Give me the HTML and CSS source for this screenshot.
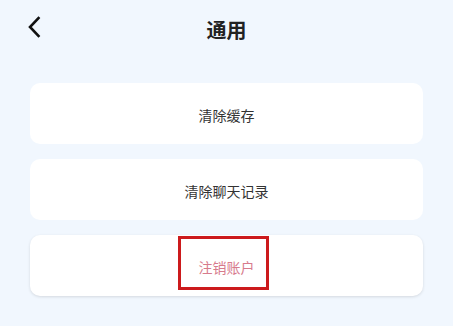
FILE: index.html
```html
<!DOCTYPE html>
<html lang="zh-CN">
<head>
<meta charset="utf-8">
<title>通用</title>
<link rel="stylesheet" href="styles.css">
</head>
<body>
<div class="page">
  <header class="header">
    <button class="back" aria-label="返回">
      <svg width="14" height="22" viewBox="0 0 14 22"><path d="M11.5 2 L3 11 L11.5 20" fill="none" stroke="#111" stroke-width="2.6" stroke-linecap="square" stroke-linejoin="miter"/></svg>
    </button>
    <h1 class="title">通用</h1>
  </header>
  <main class="list">
    <div class="card"><span class="label">清除缓存</span></div>
    <div class="card"><span class="label">清除聊天记录</span></div>
    <div class="card card-danger">
      <span class="label danger-text">注销账户</span>
      <span class="highlight"></span>
    </div>
  </main>
</div>
</body>
</html>
```
FILE: styles.css
```css
html, body {
  margin: 0;
  padding: 0;
  background: #f1f7fe;
}
.page {
  width: 453px;
  height: 326px;
  font-family: "Noto Sans CJK SC", sans-serif;
  box-sizing: border-box;
}
.header {
  position: relative;
  height: 59px;
  display: flex;
  align-items: center;
  justify-content: center;
}
.back {
  position: absolute;
  left: 27px;
  top: 16px;
  padding: 0;
  border: 0;
  background: none;
  width: 14px;
  height: 22px;
}
.back svg { display: block; }
.title {
  margin: 0;
  font-size: 20px;
  font-weight: 700;
  color: #222;
  line-height: 1;
}
.list {
  padding: 24px 30px 0 30px;
  display: flex;
  flex-direction: column;
  gap: 15px;
}
.card {
  position: relative;
  height: 61px;
  background: #fff;
  border-radius: 10px;
  display: flex;
  align-items: center;
  justify-content: center;
  padding-top: 3px;
  box-sizing: border-box;
}
.label {
  font-size: 14px;
  font-weight: 400;
  color: #333;
}
.card-danger {
  box-shadow: 0 1px 3px rgba(0, 0, 0, 0.12);
}
.danger-text {
  color: #d77b8d;
}
.highlight {
  position: absolute;
  left: 148px;
  top: 1px;
  width: 91px;
  height: 54px;
  border: 3px solid #cc1a1c;
  box-sizing: border-box;
}
```
